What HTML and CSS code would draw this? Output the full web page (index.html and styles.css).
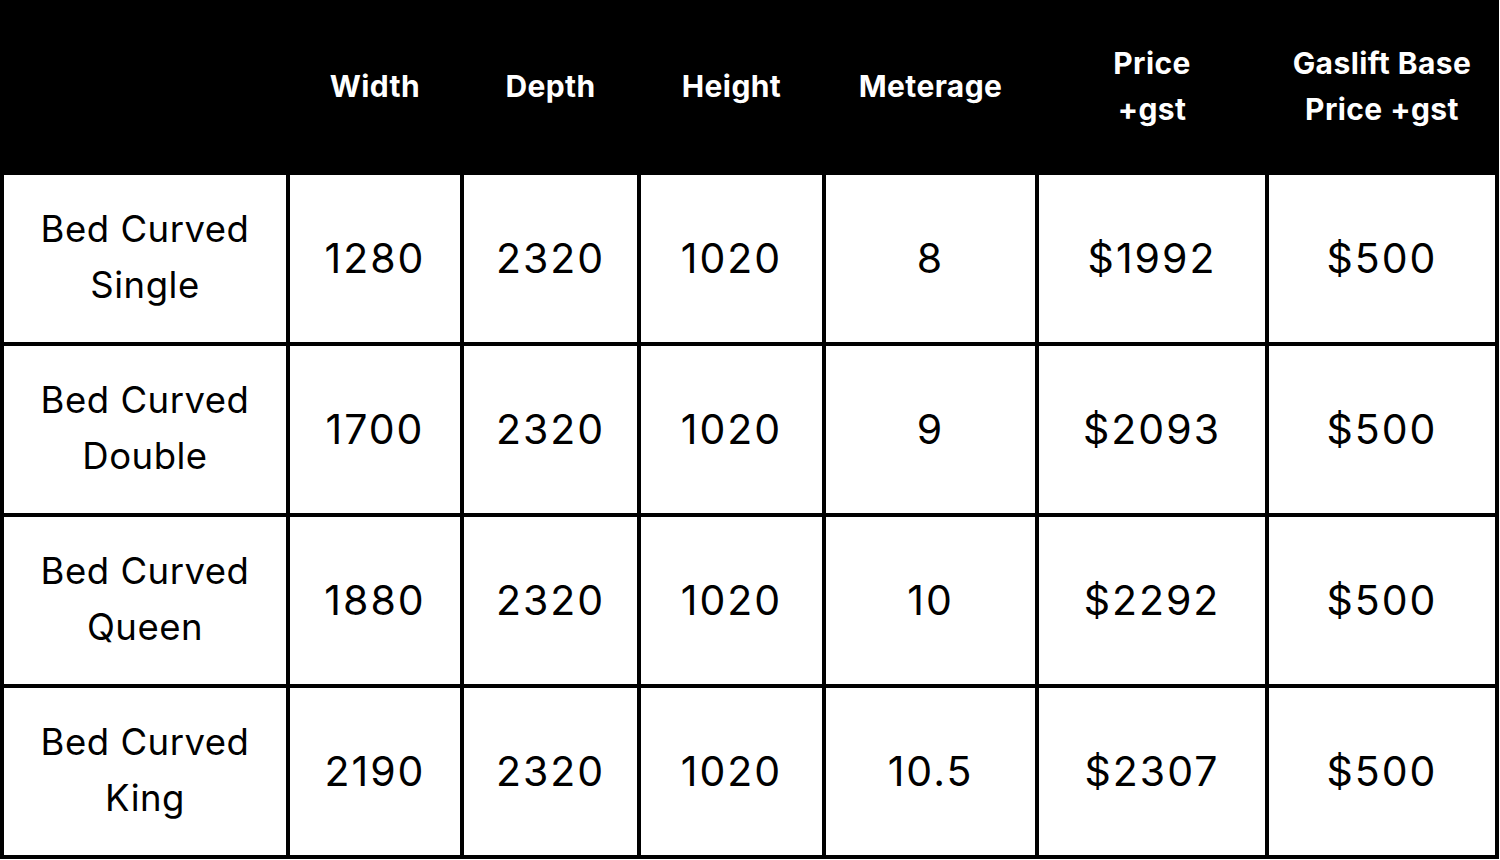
FILE: index.html
```html
<!DOCTYPE html>
<html>
<head>
<meta charset="utf-8">
<link rel="stylesheet" href="styles.css">
</head>
<body>
<div class="table">
  <div class="th"></div>
  <div class="th">Width</div>
  <div class="th">Depth</div>
  <div class="th">Height</div>
  <div class="th">Meterage</div>
  <div class="th">Price<br>+gst</div>
  <div class="th">Gaslift Base<br>Price +gst</div>

  <div class="td name">Bed Curved<br>Single</div>
  <div class="td">1280</div>
  <div class="td">2320</div>
  <div class="td">1020</div>
  <div class="td">8</div>
  <div class="td">$1992</div>
  <div class="td">$500</div>

  <div class="td name">Bed Curved<br>Double</div>
  <div class="td">1700</div>
  <div class="td">2320</div>
  <div class="td">1020</div>
  <div class="td">9</div>
  <div class="td">$2093</div>
  <div class="td">$500</div>

  <div class="td name">Bed Curved<br>Queen</div>
  <div class="td">1880</div>
  <div class="td">2320</div>
  <div class="td">1020</div>
  <div class="td">10</div>
  <div class="td">$2292</div>
  <div class="td">$500</div>

  <div class="td name">Bed Curved<br>King</div>
  <div class="td">2190</div>
  <div class="td">2320</div>
  <div class="td">1020</div>
  <div class="td">10.5</div>
  <div class="td">$2307</div>
  <div class="td">$500</div>
</div>
</body>
</html>
```
FILE: styles.css
```css
html, body {
  margin: 0;
  padding: 0;
  background: #fff;
}
body {
  font-family: Inter, Lato, "Liberation Sans", sans-serif;
}
.table {
  width: 1499px;
  display: grid;
  grid-template-columns: 282px 170px 173px 181px 209px 226px 226px;
  grid-template-rows: 171px 167px 167px 167px 167px;
  gap: 4px;
  padding: 0 4px 4px 4px;
  box-sizing: border-box;
  background: #000;
}
.th {
  display: flex;
  align-items: center;
  justify-content: center;
  text-align: center;
  color: #fff;
  font-weight: 700;
  font-size: 30px;
  line-height: 46px;
  letter-spacing: 0.4px;
}
.td {
  background: #fff;
  color: #000;
  display: flex;
  align-items: center;
  justify-content: center;
  text-align: center;
  font-size: 41px;
  line-height: 56px;
  letter-spacing: 2px;
  padding-bottom: 2px;
  box-sizing: border-box;
}
.td.name {
  font-size: 36.5px;
  letter-spacing: 0.5px;
  padding-bottom: 4px;
}
```
